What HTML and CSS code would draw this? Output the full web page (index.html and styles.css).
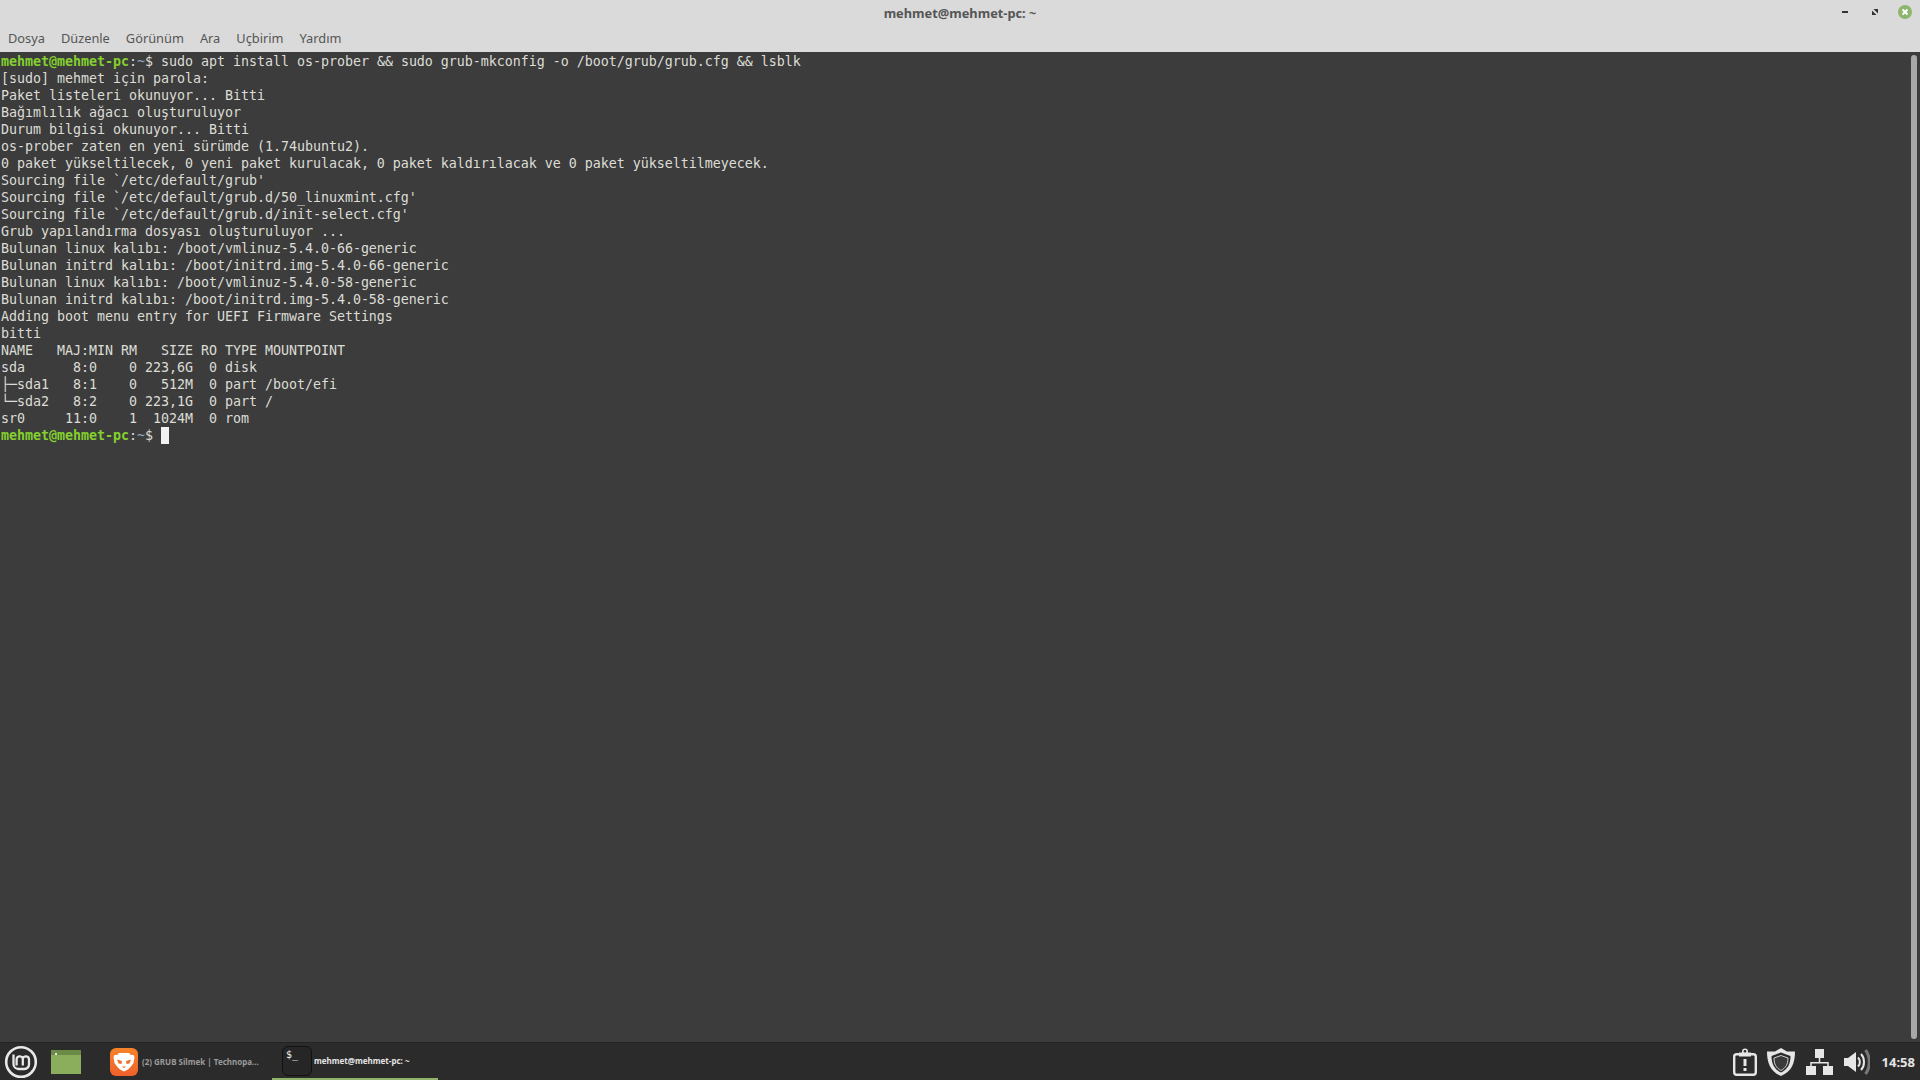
FILE: index.html
```html
<!DOCTYPE html>
<html lang="tr">
<head>
<meta charset="utf-8">
<title>mehmet@mehmet-pc: ~</title>
<link rel="stylesheet" href="styles.css">
</head>
<body>
<header class="window-head">
  <div class="titlebar">
    <span class="title">mehmet@mehmet-pc: ~</span>
    <div class="win-controls">
      <svg class="win-icon" width="24" height="24" viewBox="0 0 24 24"><rect x="9" y="11" width="6" height="2" fill="#333"/></svg>
      <svg class="win-icon" width="24" height="24" viewBox="0 0 24 24"><path d="M10.500 9H15v4.500zM9 10.500V15h4.500z" fill="#333"/></svg>
      <svg class="win-icon" width="24" height="24" viewBox="0 0 24 24"><circle cx="12" cy="12" r="7" fill="#8db56c"/><path d="M9.500 9.500l5 5M14.500 9.500l-5 5" stroke="#fff" stroke-width="2"/></svg>
    </div>
  </div>
  <nav class="menubar">
    <span>Dosya</span><span>Düzenle</span><span>Görünüm</span><span>Ara</span><span>Uçbirim</span><span>Yardım</span>
  </nav>
</header>
<main class="terminal">
<pre class="screen"><span class="p">mehmet@mehmet-pc</span>:<span class="t">~</span>$ sudo apt install os-prober &amp;&amp; sudo grub-mkconfig -o /boot/grub/grub.cfg &amp;&amp; lsblk
[sudo] mehmet için parola: 
Paket listeleri okunuyor... Bitti
Bağımlılık ağacı oluşturuluyor
Durum bilgisi okunuyor... Bitti
os-prober zaten en yeni sürümde (1.74ubuntu2).
0 paket yükseltilecek, 0 yeni paket kurulacak, 0 paket kaldırılacak ve 0 paket yükseltilmeyecek.
Sourcing file `/etc/default/grub'
Sourcing file `/etc/default/grub.d/50_linuxmint.cfg'
Sourcing file `/etc/default/grub.d/init-select.cfg'
Grub yapılandırma dosyası oluşturuluyor ...
Bulunan linux kalıbı: /boot/vmlinuz-5.4.0-66-generic
Bulunan initrd kalıbı: /boot/initrd.img-5.4.0-66-generic
Bulunan linux kalıbı: /boot/vmlinuz-5.4.0-58-generic
Bulunan initrd kalıbı: /boot/initrd.img-5.4.0-58-generic
Adding boot menu entry for UEFI Firmware Settings
bitti
NAME   MAJ:MIN RM   SIZE RO TYPE MOUNTPOINT
sda      8:0    0 223,6G  0 disk 
├─sda1   8:1    0   512M  0 part /boot/efi
└─sda2   8:2    0 223,1G  0 part /
sr0     11:0    1  1024M  0 rom  
<span class="p">mehmet@mehmet-pc</span>:<span class="t">~</span>$ <span class="cursor"> </span></pre>
<div class="scrollbar"></div>
</main>
<footer class="taskbar">
  <div class="launchers">
    <svg class="mint" width="34" height="34" viewBox="0 0 34 34">
      <circle cx="17" cy="17" r="14.800" fill="none" stroke="#e8e8e8" stroke-width="2.600"/>
      <path d="M9.500 9.500V19a5 5 0 0 0 5 5h6a4.500 4.500 0 0 0 4.500-4.500v-5a3.200 3.200 0 0 0-6.200-1 3.200 3.200 0 0 0-6.200 1V20.500M18.800 13.500V20.500" fill="none" stroke="#e8e8e8" stroke-width="2.300"/>
    </svg>
    <svg class="files" width="30" height="24" viewBox="0 0 30 24">
      <rect width="30" height="24" fill="#8aae5c"/>
      <rect width="30" height="5" fill="#6a8a45"/>
      <rect x="4" y="3" width="2" height="2" fill="#e8e8e8"/>
    </svg>
  </div>
  <div class="task task-brave">
    <svg width="28" height="28" viewBox="0 0 28 28">
      <defs><linearGradient id="brave" x1="0" y1="0" x2="0" y2="1"><stop offset="0" stop-color="#f5842a"/><stop offset="1" stop-color="#f0602a"/></linearGradient></defs>
      <rect width="28" height="28" rx="6" fill="url(#brave)"/>
      <path d="M9 5h10l2 2h2.500l1 2-1 6-2.500 3.500-3 3L14 23.500 10 21.500l-3-3L4.500 15l-1-6 1-2H7z" fill="#fff"/>
      <path d="M7 11.500l5 1.500-.5 3-3-.5zM21 11.500l-5 1.500.5 3 3-.5zM12 18.500h4l-2 1.800z" fill="#f0702a"/>
    </svg>
    <span class="task-label">(2) GRUB Silmek | Technopa...</span>
  </div>
  <div class="task task-term">
    <div class="term-icon"><span>$_</span></div>
    <span class="task-label active">mehmet@mehmet-pc: ~</span>
  </div>
  <div class="tray">
    <svg class="tray-note" width="24" height="28" viewBox="0 0 24 28">
      <circle cx="12" cy="3.500" r="2.200" fill="none" stroke="#e6e6e6" stroke-width="1.600"/>
      <rect x="6" y="4.500" width="12" height="4" fill="#e6e6e6"/>
      <rect x="1.200" y="6.200" width="21.600" height="20.600" rx="2.500" fill="none" stroke="#e6e6e6" stroke-width="2.400"/>
      <path d="M10.500 11h3v7h-3zM10.500 20h3v3h-3z" fill="#e6e6e6"/>
    </svg>
    <svg width="28" height="28" viewBox="0 0 28 28">
      <path d="M14 0 20 3.500 28 3.500c0 11-3 20-14 24.500C3 23.500 0 14.500 0 3.500L8 3.500z" fill="#e6e6e6"/>
      <path d="M14 4.500 23.500 8c0 8-3 13.500-9.500 16.500C7.500 21.500 4.500 16 4.500 8z" fill="#2b2b2b"/>
      <path d="M14 7.500 21 10c0 6-2 10-7 12.500C9 20 7 16 7 10z" fill="#3a3a3a" stroke="#cfcfcf" stroke-width="1"/>
    </svg>
    <svg width="27" height="28" viewBox="0 0 27 28">
      <path d="M9 1h9v9H9zM0 18h10v9H0zM17 18h10v9H17z" fill="#e6e6e6"/>
      <path d="M13.500 10v4M5 18v-3.300h17V18" fill="none" stroke="#e6e6e6" stroke-width="1.500"/>
    </svg>
    <svg width="26" height="26" viewBox="0 0 26 26">
      <path d="M0 9h4l8-6v20l-8-6H0z" fill="#e6e6e6"/>
      <path d="M14 8.500c2.500 2.500 2.500 6.500 0 9" fill="none" stroke="#e6e6e6" stroke-width="2"/>
      <path d="M17 5c4 4 4 12 0 16" fill="none" stroke="#e6e6e6" stroke-width="2"/>
      <path d="M21.500 1c5 6.500 5 17.500 0 24" fill="none" stroke="#777" stroke-width="3"/>
    </svg>
    <span class="clock">14:58</span>
  </div>
</footer>
</body>
</html>
```
FILE: styles.css
```css
* { box-sizing: border-box; }
html, body { height: 100%; }
body {
  margin: 0;
  display: flex;
  flex-direction: column;
  width: 1920px;
  height: 1080px;
  overflow: hidden;
  background: #3c3c3c;
  font-family: "Noto Sans", "Open Sans", sans-serif;
}
.window-head { background: #dadada; height: 52px; flex: none; padding-bottom: 3px; }
.titlebar {
  height: 26px;
  display: flex;
  align-items: center;
  justify-content: center;
  position: relative;
}
.title { font-size: 12.800px; font-weight: 700; color: #555; }
.win-controls {
  position: absolute;
  top: 0;
  right: 3px;
  display: flex;
  gap: 6px;
}
.win-icon { display: block; }
.menubar {
  height: 23px;
  display: flex;
  align-items: center;
  gap: 16px;
  padding: 0 0 0 8px;
  font-size: 12.800px;
  color: #555;
}
.terminal {
  flex: 1;
  position: relative;
  background: #3c3c3c;
  min-height: 0;
}
.screen {
  margin: 0;
  padding: 1px 0 0 1px;
  font-family: "DejaVu Sans Mono", monospace;
  font-size: 13.330px;
  letter-spacing: -0.027px;
  line-height: 17px;
  color: #dcdcd6;
  white-space: pre;
}
.p { font-weight: 700; color: #84d02f; }
.t { color: #8fa3bd; }
.cursor { background: #f2f2f2; display: inline-block; width: 8px; height: 17px; vertical-align: top; }
.scrollbar {
  position: absolute;
  top: 3px;
  right: 3px;
  bottom: 3px;
  width: 6px;
  border-radius: 3px;
  background: #a8a8a8;
}
.taskbar {
  height: 38px;
  flex: none;
  display: flex;
  align-items: center;
  background: #2b2b2b;
  border-top: 1px solid #232323;
  padding-left: 4px;
}
.launchers { display: flex; align-items: center; gap: 13px; width: 106px; flex: none; }
.mint { display: block; }
.files { display: block; }
.task {
  display: flex;
  align-items: center;
  height: 100%;
  flex: none;
  position: relative;
}
.task-brave { width: 162px; gap: 4px; }
.task-term {
  width: 166px;
  padding-left: 10px;
  gap: 2px;
  border-bottom: 2px solid #8fb46a;
}
.task-label { font-size: 8px; font-weight: 700; color: #9a9a9a; white-space: nowrap; }
.task-label.active { color: #e4e4e4; }
.term-icon {
  width: 30px;
  height: 30px;
  border-radius: 6px;
  border: 1px solid #111;
  background: #262626;
  color: #eee;
  font-family: "DejaVu Sans Mono", monospace;
  font-size: 10px;
  line-height: 14px;
  padding: 1px 0 0 3px;
}
.tray {
  margin-left: auto;
  display: flex;
  align-items: center;
  gap: 11px;
  padding-right: 5px;
}
.tray svg { display: block; }
.tray-note { margin-right: -1px; }
.clock { font-size: 13px; font-weight: 700; color: #e4e4e4; margin-left: 1px; }
```
